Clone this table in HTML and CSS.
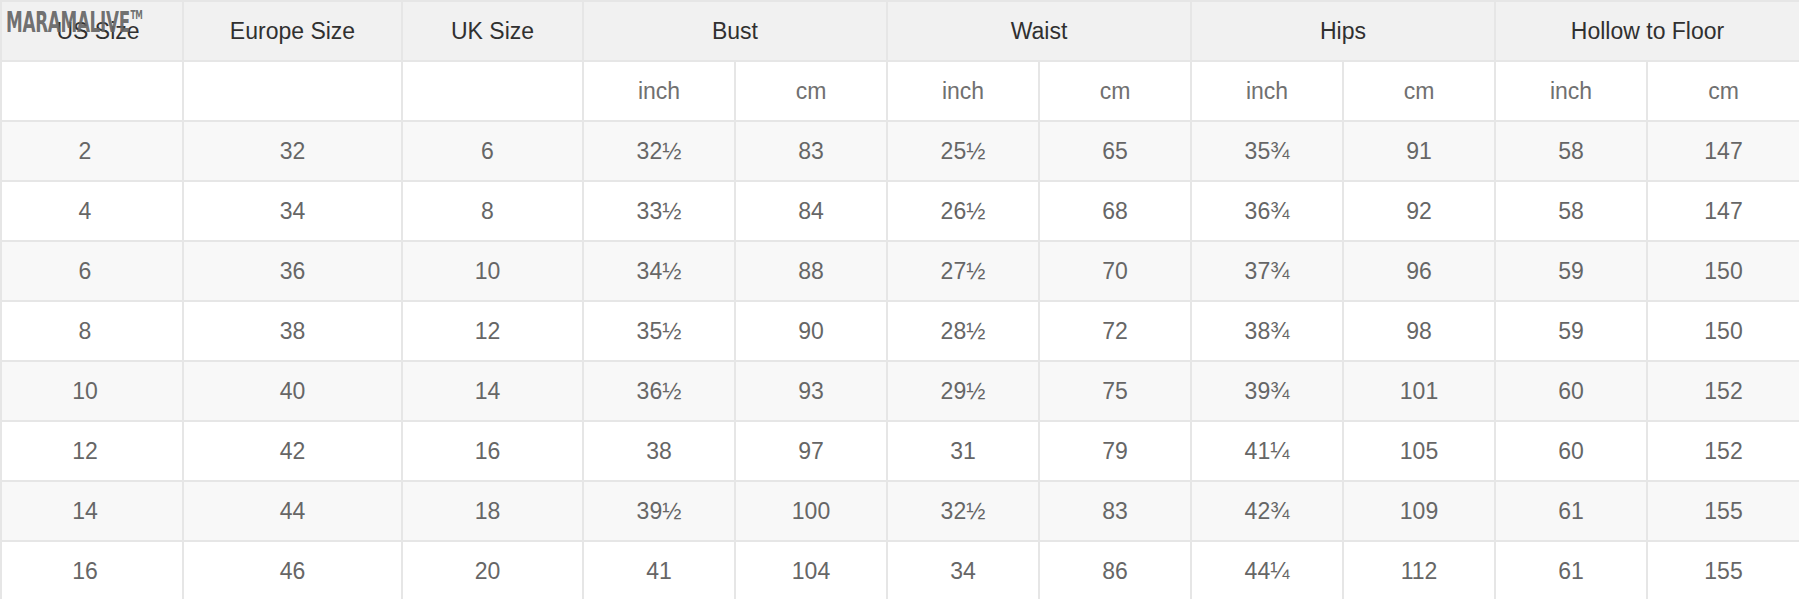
FILE: index.html
```html
<!DOCTYPE html>
<html>
<head>
<meta charset="utf-8">
<link rel="stylesheet" href="styles.css">
</head>
<body>
<div class="wrap">
  <div class="logo">MARAMALIVE<span class="tm">TM</span></div>
  <table class="chart">
    <colgroup>
      <col class="c-us"><col class="c-eu"><col class="c-uk">
      <col class="c-m"><col class="c-m"><col class="c-m"><col class="c-m">
      <col class="c-m"><col class="c-m"><col class="c-m"><col class="c-last">
    </colgroup>
    <thead>
      <tr class="head">
        <th class="us-head">US Size</th><th>Europe Size</th><th>UK Size</th>
        <th colspan="2">Bust</th><th colspan="2">Waist</th>
        <th colspan="2">Hips</th><th colspan="2">Hollow to Floor</th>
      </tr>
      <tr class="units">
        <td></td><td></td><td></td>
        <td>inch</td><td>cm</td><td>inch</td><td>cm</td>
        <td>inch</td><td>cm</td><td>inch</td><td>cm</td>
      </tr>
    </thead>
    <tbody>
      <tr class="alt"><td class="first">2</td><td>32</td><td class="uk">6</td><td>32½</td><td>83</td><td>25½</td><td>65</td><td>35¾</td><td>91</td><td>58</td><td>147</td></tr>
      <tr><td class="first">4</td><td>34</td><td class="uk">8</td><td>33½</td><td>84</td><td>26½</td><td>68</td><td>36¾</td><td>92</td><td>58</td><td>147</td></tr>
      <tr class="alt"><td class="first">6</td><td>36</td><td class="uk">10</td><td>34½</td><td>88</td><td>27½</td><td>70</td><td>37¾</td><td>96</td><td>59</td><td>150</td></tr>
      <tr><td class="first">8</td><td>38</td><td class="uk">12</td><td>35½</td><td>90</td><td>28½</td><td>72</td><td>38¾</td><td>98</td><td>59</td><td>150</td></tr>
      <tr class="alt"><td class="first">10</td><td>40</td><td class="uk">14</td><td>36½</td><td>93</td><td>29½</td><td>75</td><td>39¾</td><td>101</td><td>60</td><td>152</td></tr>
      <tr><td class="first">12</td><td>42</td><td class="uk">16</td><td>38</td><td>97</td><td>31</td><td>79</td><td>41¼</td><td>105</td><td>60</td><td>152</td></tr>
      <tr class="alt"><td class="first">14</td><td>44</td><td class="uk">18</td><td>39½</td><td>100</td><td>32½</td><td>83</td><td>42¾</td><td>109</td><td>61</td><td>155</td></tr>
      <tr><td class="first">16</td><td>46</td><td class="uk">20</td><td>41</td><td>104</td><td>34</td><td>86</td><td>44¼</td><td>112</td><td>61</td><td>155</td></tr>
    </tbody>
  </table>
</div>
</body>
</html>
```

FILE: styles.css
```css
html, body {
  margin: 0;
  padding: 0;
  background: #ffffff;
}

.wrap {
  position: relative;
  width: 1799px;
  height: 599px;
  overflow: hidden;
}

.chart {
  width: 1799px;
  table-layout: fixed;
  border-collapse: collapse;
  font-family: "Liberation Sans", Arial, sans-serif;
  font-size: 23px;
}

.c-us { width: 182px; }
.c-eu { width: 219px; }
.c-uk { width: 181px; }
.c-m { width: 152px; }
.c-last { width: 153px; }

.chart th,
.chart td {
  height: 58px;
  padding: 0;
  border: 2px solid #e6e6e6;
  text-align: center;
  vertical-align: middle;
  white-space: nowrap;
}

.chart tr {
  height: 60px;
}

.chart .us-head {
  padding-left: 12px;
}

.chart .first {
  padding-right: 14px;
}

.chart .uk {
  padding-right: 10px;
}

.head th {
  background: #f1f1f1;
  color: #303030;
  font-weight: normal;
}

.units td {
  background: #ffffff;
  color: #707070;
}

.chart tbody td {
  color: #666666;
  background: #ffffff;
}

.chart tbody tr.alt td {
  background: #f8f8f8;
}

.logo {
  position: absolute;
  left: 6px;
  top: 8px;
  z-index: 2;
  font-family: "DejaVu Sans Condensed", "Liberation Sans", sans-serif;
  font-stretch: condensed;
  font-weight: bold;
  font-size: 29px;
  letter-spacing: -0.5px;
  color: rgba(100, 100, 100, 0.92);
  line-height: 1;
  transform: scaleX(0.645);
  transform-origin: left top;
}

.logo .tm {
  font-size: 13px;
  vertical-align: top;
  margin-left: 1px;
  position: relative;
  top: 0;
}
```
